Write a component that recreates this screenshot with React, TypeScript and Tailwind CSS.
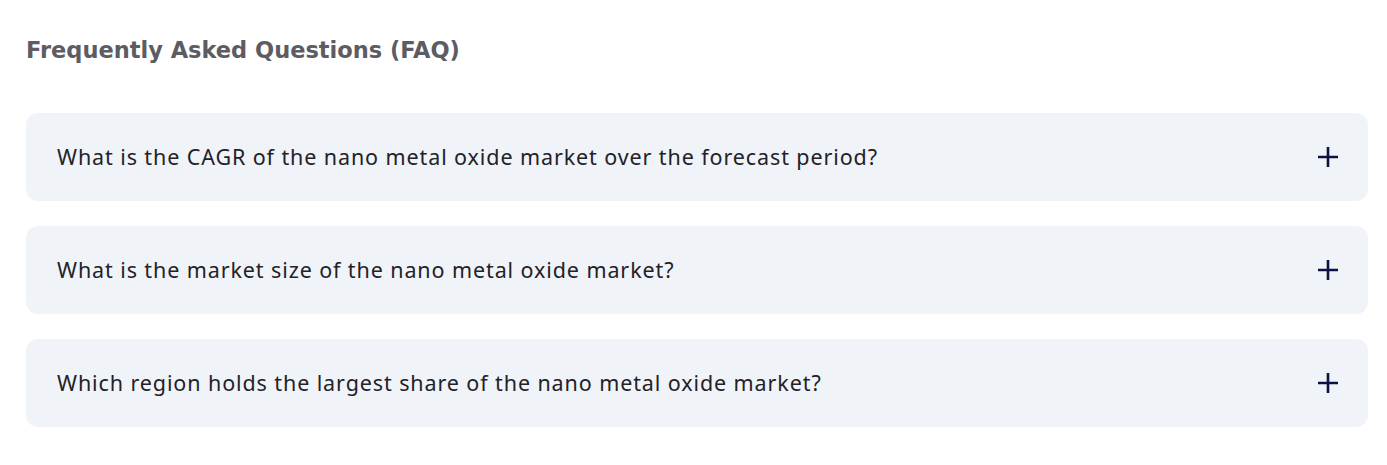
import React from 'react';

const questions = [
  'What is the CAGR of the nano metal oxide market over the forecast period?',
  'What is the market size of the nano metal oxide market?',
  'Which region holds the largest share of the nano metal oxide market?',
];

function PlusIcon() {
  return (
    <svg width="22" height="22" viewBox="0 0 22 22" className="text-[#0b1243]">
      <path d="M11 1v20M1 11h20" stroke="currentColor" strokeWidth="2.6" fill="none" />
    </svg>
  );
}

export default function App() {
  return (
    <div className="bg-white pl-[26px] pr-[19px] pt-[36px] pb-[38px] w-full">
      {/* Header */}
      <h2 className="text-[22.5px] font-bold text-[#5d5c63] leading-[28px] font-['DejaVu_Sans',sans-serif]">
        Frequently Asked Questions (FAQ)
      </h2>

      {/* Questions */}
      <div className="mt-[49px] flex flex-col gap-[25px]">
        {questions.map((q) => (
          <div
            key={q}
            className="flex items-center justify-between h-[88px] rounded-[12px] bg-[#f0f3f8] pl-[31px] pr-[29px]"
          >
            <span className="text-[21.5px] tracking-[0.9px] text-[#222228] font-['Noto_Sans',sans-serif]">{q}</span>
            <PlusIcon />
          </div>
        ))}
      </div>
    </div>
  );
}
